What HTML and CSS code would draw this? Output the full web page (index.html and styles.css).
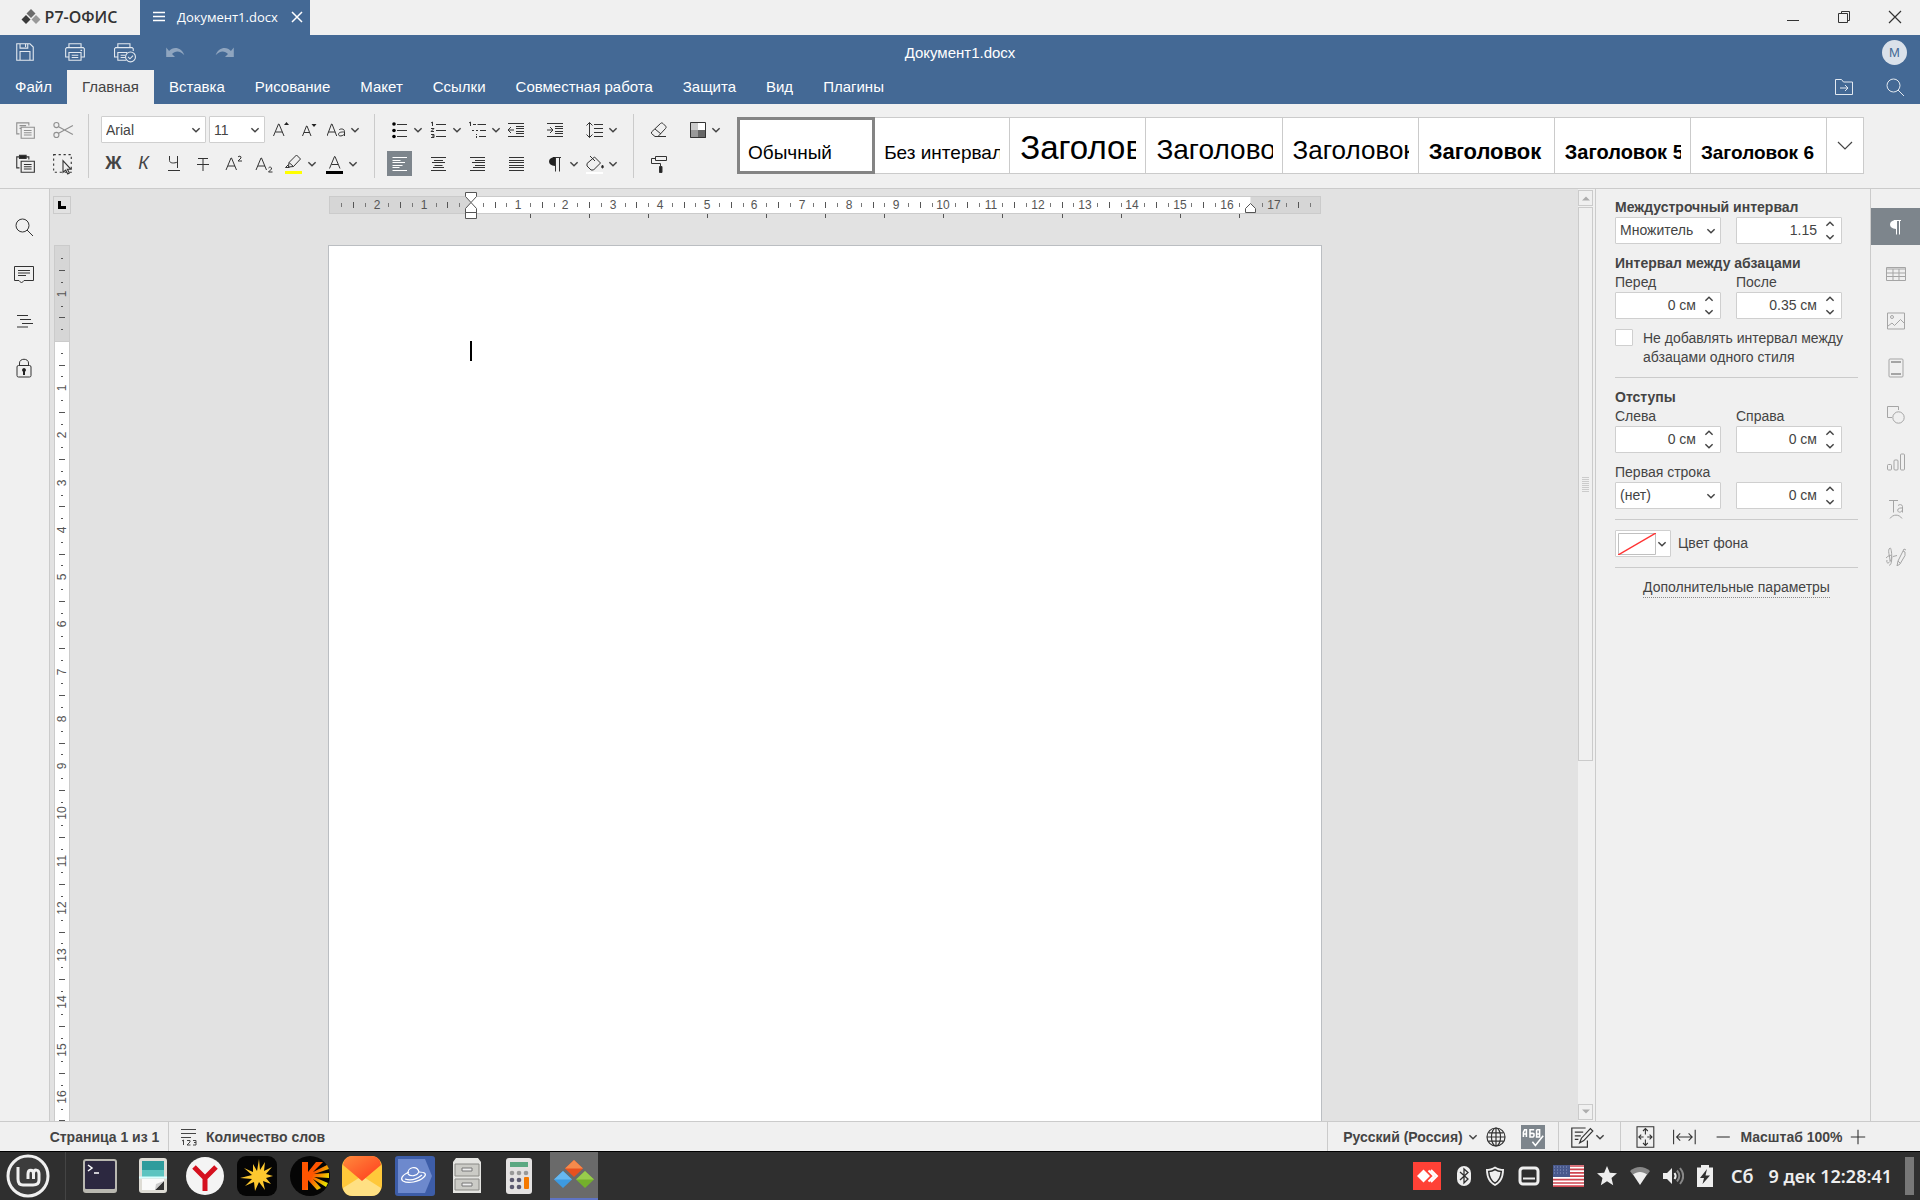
FILE: index.html
```html
<!DOCTYPE html>
<html lang="ru">
<head>
	<title>Документ1.docx</title>
	<meta charset="utf-8">
	<link rel="stylesheet" href="styles.css">
</head>

<body>
	<svg class="defs">
		<symbol id="caret" viewBox="0 0 10 10"><path d="M2 3.500l3 3 3-3" fill="none" stroke="#444" stroke-width="1.200"/></symbol>
		<symbol id="up" viewBox="0 0 10 10"><path d="M2 6.500l3-3 3 3" fill="none" stroke="#444" stroke-width="1.200"/></symbol>
		<symbol id="down" viewBox="0 0 10 10"><path d="M2 3.500l3 3 3-3" fill="none" stroke="#444" stroke-width="1.200"/></symbol>
		<symbol id="search" viewBox="0 0 20 20"><circle cx="8.500" cy="8.500" r="6.500"/><path d="M13 13l6 6"/></symbol>
	</svg>

	<!-- window title -->
	<header class="titlebar">
		<button class="home-tab">
			<svg width="20" height="16" viewBox="0 0 20 16"><path fill="#6b6b6b" d="M10 0l4.500 4.500L10 9 5.500 4.500z"/><path fill="#3a3a3a" d="M5 6l4.500 4.500L5 15 .5 10.500z"/><path fill="#999" d="M15 6l4.500 4.500L15 15l-4.500-4.500z"/></svg>
			<span>Р7-ОФИС</span>
		</button>
		<div class="doc-tab">
			<svg width="12" height="12" viewBox="0 0 12 12"><path d="M0 1.500h12M0 5.500h12M0 9.500h12" stroke="#fff" stroke-width="1.500"/></svg>
			<span>Документ1.docx</span>
			<button title="Закрыть"><svg width="12" height="12" viewBox="0 0 12 12"><path d="M1 1l10 10M11 1L1 11" stroke="#fff" stroke-width="1.500"/></svg></button>
		</div>
		<div class="window-btns">
			<button title="Свернуть"><svg width="14" height="14" viewBox="0 0 14 14"><path d="M1 10.500h12" stroke="#333"/></svg></button>
			<button title="Развернуть"><svg width="14" height="14" viewBox="0 0 14 14" fill="none" stroke="#333"><path d="M1.500 3.500h9v9h-9zM4.500 3.500v-2h8v9h-2"/></svg></button>
			<button title="Закрыть"><svg width="14" height="14" viewBox="0 0 14 14"><path d="M1 1l12 12M13 1L1 13" stroke="#333" stroke-width="1.200"/></svg></button>
		</div>
	</header>

	<div class="head">
		<div class="quick">
			<button title="Сохранить"><svg class="ic" viewBox="0 0 20 20"><path d="M2.500 2.500h12l3 3v12h-15zM5.500 17V9.500h9V17M5.500 2.500v4h7v-4M10.500 3v2.500"/></svg></button>
			<button title="Печать"><svg class="ic" viewBox="0 0 20 20"><path d="M4.500 6V2.500h11V6M4 14.500H1.500V7l1-1h15l1 1v7.500H16M4.500 10.500h11v7h-11zM7 13h6M7 15h6M15 8.500h1.500"/></svg></button>
			<button title="Быстрая печать"><svg class="ic" viewBox="0 0 20 20"><path d="M3.500 6V2.500h11V6M3.500 14.500H.5V7l1-1h15l1 1v2M11 17.500H3.500v-7H12M6 13h4M6 15h4"/><circle cx="15" cy="14.500" r="4.500"/><path d="M12.800 14.500l1.700 1.700 2.800-3"/></svg></button>
			<button title="Отменить" disabled><svg class="ic" viewBox="0 0 20 20"><path d="M2 6v8.500h8L7.300 11.800C10 8.500 15 8.500 18.500 13 16 5.500 8.500 4.500 4.600 9z" fill="#fff" stroke="none"/></svg></button>
			<button title="Повторить" disabled><svg class="ic" viewBox="0 0 20 20"><path d="M18 6v8.500h-8l2.700-2.700C10 8.500 5 8.500 1.500 13 4 5.500 11.500 4.500 15.400 9z" fill="#fff" stroke="none"/></svg></button>
		</div>
		<div class="doc-name">Документ1.docx</div>
		<div class="user"><span>M</span></div>
	</div>

	<nav class="tabs">
		<a href="#">Файл</a>
		<a href="#" class="active">Главная</a>
		<a href="#">Вставка</a>
		<a href="#">Рисование</a>
		<a href="#">Макет</a>
		<a href="#">Ссылки</a>
		<a href="#">Совместная работа</a>
		<a href="#">Защита</a>
		<a href="#">Вид</a>
		<a href="#">Плагины</a>
		<div class="tabs-right">
			<button title="Открыть расположение файла"><svg class="ic" viewBox="0 0 20 20"><path d="M1.500 2.500h6l2 2.500h9v12.500h-17zM6 11h8M11 8l3 3-3 3"/></svg></button>
			<button title="Поиск"><svg class="ic" viewBox="0 0 20 20"><use href="#search"/></svg></button>
		</div>
	</nav>

	<!-- toolbar -->
	<div class="toolbar">
		<div class="group g-clip">
			<div class="row">
				<button class="off" title="Копировать"><svg class="ic" viewBox="0 0 20 20"><path d="M5 13.500H2.500v-10h11V6M5 6h6M5 8.500h1M6.500 7.500h12v10h-12zM9 10.500h7M9 12.500h7M9 14.500h7"/></svg></button>
				<button class="off" title="Вырезать"><svg class="ic" viewBox="0 0 20 20"><circle cx="4" cy="5.500" r="2.300"/><circle cx="4" cy="14.500" r="2.300"/><path d="M6 7l13 7M6 13l13-7"/></svg></button>
			</div>
			<div class="row">
				<button title="Вставить"><svg class="ic" viewBox="0 0 20 20"><path d="M5 13.500H2.500v-10h11V6M6.500 7.500h12v10h-12zM9 10.500h7M9 12.500h7M9 14.500h7"/><path d="M5 2h6v3H5z" fill="#222"/></svg></button>
				<button title="Выделить"><svg class="ic" viewBox="0 0 20 20"><path d="M1.500 1.500h16v16h-16z" stroke-dasharray="2 2.500"/><path d="M10 7v10.500l2.500-2 1.800 3.500 1.500-.8-1.800-3.400h3.200z" fill="#f0f0f0"/></svg></button>
			</div>
		</div>
		<div class="group g-font">
			<div class="row">
				<label class="combo font-name"><select title="Шрифт"><option>Arial</option></select><svg><use href="#caret"/></svg></label>
				<label class="combo font-size"><select title="Размер шрифта"><option>11</option></select><svg><use href="#caret"/></svg></label>
				<button title="Увеличить размер"><svg class="ic" viewBox="0 0 20 20"><path d="M2.500 16l5-12h.5l5 12M4.500 12h6.700"/><path d="M13 5l2.500-3L18 5z" fill="#222" stroke="none"/></svg></button>
				<button title="Уменьшить размер"><svg class="ic" viewBox="0 0 20 20"><path d="M3.500 16L7.500 6H8l4 10M5 12.500h5.500"/><path d="M12.500 4l2.500 3 2.500-3z" fill="#222" stroke="none"/></svg></button>
				<button title="Изменить регистр"><svg class="ic" viewBox="0 0 20 20"><path d="M0 16L4.500 4H5l4.700 12M1.500 12h6.700M12 10c1-1.500 5.500-1.700 5.500 1.500V16M17.500 12c-3-.2-6 .3-6 2.300 0 2.500 4.500 2 6-.5"/></svg></button>
				<button class="drop"><svg><use href="#caret"/></svg></button>
			</div>
			<div class="row wide">
				<button title="Полужирный"><b class="letter">Ж</b></button>
				<button title="Курсив"><i class="letter">К</i></button>
				<button title="Подчеркнутый"><svg class="ic" viewBox="0 0 20 20"><path d="M5.500 2v4.500c0 3 5 3 8 1.500M13.500 2v12M4 16.500h12"/></svg></button>
				<button title="Зачеркнутый"><svg class="ic" viewBox="0 0 20 20"><path d="M4 4.500h10M9 4.500V17M3 10.500h12"/></svg></button>
				<button title="Надстрочный"><svg class="ic" viewBox="0 0 20 20"><path d="M2 16L7 4h.5l5 12M4 12h7M14 3c1-1.500 3.500-1 3 1l-3 3h4"/></svg></button>
				<button title="Подстрочный"><svg class="ic" viewBox="0 0 20 20"><path d="M2 16L7 4h.5l5 12M4 12h7M14.500 14c1-1.500 3.500-1 3 1l-3 3h4"/></svg></button>
				<button title="Цвет выделения"><svg class="ic" viewBox="0 0 20 20"><path d="M5 8.500L12.500 1l4 4-7 7.500-5 .5zM5 8.500l4.500 4M4.500 10.500l-3 3h4"/><path d="M1 17h17v3H1z" fill="#ff0" stroke="none"/></svg></button>
				<button class="drop"><svg><use href="#caret"/></svg></button>
				<button title="Цвет шрифта"><svg class="ic" viewBox="0 0 20 20"><path d="M4.500 14.500l5-12h.5l5 12M6.500 10.500h6.500"/><path d="M1 17h17v3H1z" fill="#000" stroke="none"/></svg></button>
				<button class="drop"><svg><use href="#caret"/></svg></button>
			</div>
		</div>
		<div class="group g-par">
			<div class="row">
				<button title="Маркеры"><svg class="ic" viewBox="0 0 20 20"><g fill="#000" stroke="none"><circle cx="4" cy="4" r="1.800"/><circle cx="4" cy="10.500" r="1.800"/><circle cx="4" cy="16.500" r="1.800"/></g><path d="M7 4.500h10M7 10.500h10M7 16.500h10"/></svg></button>
				<button class="drop"><svg><use href="#caret"/></svg></button>
				<button title="Нумерация"><svg class="ic" viewBox="0 0 20 20"><path d="M2 3l1.500-1v4M2 8.500h3L2 11.500h3M2 14.500h3v3H2M3 16h2M7 4.500h10M7 10.500h10M7 16.500h10"/></svg></button>
				<button class="drop"><svg><use href="#caret"/></svg></button>
				<button title="Многоуровневый список"><svg class="ic" viewBox="0 0 20 20"><path d="M1 3l1.500-1v4M5 4.500h3M9.500 4.500H18M4 10.500h2M8 10.500h2M12 10.500h6M8.500 14v1M8.500 16v2M11 16.500h7"/></svg></button>
				<button class="drop"><svg><use href="#caret"/></svg></button>
				<button title="Уменьшить отступ"><svg class="ic" viewBox="0 0 20 20"><path d="M1 3.500h16M9 6.500h8M9 8.500h8M9 11.500h8M9 13.500h8M1 16.500h16M1 10h6M4 7l-3 3 3 3"/></svg></button>
				<span class="nodrop"></span>
				<button title="Увеличить отступ"><svg class="ic" viewBox="0 0 20 20"><path d="M1 3.500h16M9 6.500h8M9 8.500h8M9 11.500h8M9 13.500h8M1 16.500h16M1 10h6M4 7l3 3-3 3"/></svg></button>
				<span class="nodrop"></span>
				<button title="Междустрочный интервал"><svg class="ic" viewBox="0 0 20 20"><path d="M4.500 2.500v15M1.500 5.500l3-3 3 3M1.500 14.500l3 3 3-3M9 4.500h9M9 8.500h9M9 12.500h9M9 16.500h9"/></svg></button>
				<button class="drop"><svg><use href="#caret"/></svg></button>
			</div>
			<div class="row">
				<button class="on" title="По левому краю"><svg class="ic" viewBox="0 0 20 20"><path d="M2.500 3.500H17M2.500 6.500h8M2.500 8.500H15M2.500 11.500h10M2.500 13.500h7M2.500 16.500H17"/></svg></button>
				<span class="nodrop"></span>
				<button title="По центру"><svg class="ic" viewBox="0 0 20 20"><path d="M2 3.500h15M5 6.500h9M3 8.500h13M5.500 11.500h8M4 13.500h11M2 16.500h15"/></svg></button>
				<span class="nodrop"></span>
				<button title="По правому краю"><svg class="ic" viewBox="0 0 20 20"><path d="M2 3.500h15M7 6.500h10M4 8.500h13M7 11.500h10M5 13.500h12M2 16.500h15"/></svg></button>
				<span class="nodrop"></span>
				<button title="По ширине"><svg class="ic" viewBox="0 0 20 20"><path d="M2 3.500h15M2 6.500h15M2 8.500h15M2 11.500h15M2 13.500h15M2 16.500h15"/></svg></button>
				<span class="nodrop"></span>
				<button title="Непечатаемые символы"><svg class="ic" viewBox="0 0 20 20"><path d="M7 3.500h8M9.500 3.500v14M13.500 3.500v14"/><path d="M9 3v9C1 12 1 3 9 3z" fill="#222" stroke="none"/></svg></button>
				<button class="drop"><svg><use href="#caret"/></svg></button>
				<button title="Заливка"><svg class="ic" viewBox="0 0 20 20"><path d="M2 9.500L9.500 3l6 6L8.500 16H6l-4-4zM5 2l5 5"/><path d="M17.500 11c3 4-3 4 0 0z" fill="#222"/><path d="M1 18h17v3H1z" fill="#fff" stroke="none"/></svg></button>
				<button class="drop"><svg><use href="#caret"/></svg></button>
			</div>
		</div>
		<div class="group g-clear">
			<div class="row">
				<button title="Очистить стиль"><svg class="ic" viewBox="0 0 20 20"><path d="M2.500 12l9-8.500c1-.9 1.700-.6 2.500 0l2.500 2.500c.8.900.8 1.700 0 2.500L9 16.500H6l-3.500-3zM6 9l6 5M9 16.500h8"/></svg></button>
				<span class="nodrop"></span>
				<button title="Цветовая схема"><svg class="ic" viewBox="0 0 20 20"><path d="M2 2h8v8H2z" fill="#ccc" stroke="none"/><path d="M10 2h8v8h-8z" fill="#fff" stroke="none"/><path d="M2 10h8v8H2z" fill="#999" stroke="none"/><path d="M10 10h8v8h-8z" fill="#666" stroke="none"/><path d="M2.500 2.500h15v15h-15z"/></svg></button>
				<button class="drop"><svg><use href="#caret"/></svg></button>
			</div>
			<div class="row">
				<button title="Копировать стиль"><svg class="ic" viewBox="0 0 20 20"><path d="M6.500 2.500h11v4h-11zM6.500 4.500h-4v5H11.500V12"/><path d="M10.500 12.500h2.500v6h-2.500z" fill="#222"/></svg></button>
			</div>
		</div>
		<div class="gallery">
			<button class="style s-normal selected"><span>Обычный</span></button>
			<button class="style s-normal"><span>Без интервала</span></button>
			<button class="style s-h1"><span>Заголовок 1</span></button>
			<button class="style s-h2"><span>Заголовок 2</span></button>
			<button class="style s-h3"><span>Заголовок 3</span></button>
			<button class="style s-h4"><span>Заголовок 4</span></button>
			<button class="style s-h5"><span>Заголовок 5</span></button>
			<button class="style s-h6"><span>Заголовок 6</span></button>
			<button class="more" title="Ещё"><svg width="16" height="10" viewBox="0 0 16 10"><path d="M1 1l7 7 7-7" fill="none" stroke="#444" stroke-width="1.200"/></svg></button>
		</div>
	</div>

	<main>
		<aside class="left-menu">
			<button title="Поиск"><svg class="ic" viewBox="0 0 20 20"><use href="#search"/></svg></button>
			<button title="Комментарии"><svg class="ic" viewBox="0 0 20 20"><path d="M.5 2.500h19v14H10L7.500 19 5 16.500H.5zM4 6.500h12M4 9h12M4 11.500h8"/></svg></button>
			<button title="Навигация"><svg class="ic" viewBox="0 0 20 20"><path d="M3 4.500h11M6 8.500h11M8 12.500h11M3 16h11"/></svg></button>
			<button title="Защита"><svg class="ic" viewBox="0 0 20 20"><rect x="3" y="7.500" width="14" height="11.500" rx="1.500"/><path d="M5.500 7.500V5c0-5 9-5 9 0v2.500"/><path d="M10 10a2 2 0 0 1 1 3.700V17H9v-3.300A2 2 0 0 1 10 10z" fill="#222" stroke="none"/></svg></button>
		</aside>

		<section class="editor">
			<button class="tab-kind" title="Табуляция"><svg width="8" height="8" viewBox="0 0 8 8"><path d="M1.500 0v6.500H8" fill="none" stroke="#000" stroke-width="3"/></svg></button>
			<div class="hruler"><svg id="hruler" width="994" height="32"></svg></div>
			<div class="vruler"><svg id="vruler" width="16" height="1500"></svg></div>
			<div class="canvas"><div class="page"><div class="cursor"></div></div></div>
			<div class="scroll">
				<button title="Вверх"><svg width="10" height="6" viewBox="0 0 10 6"><path d="M1 5.500l4-4 4 4z" fill="#adadad"/></svg></button>
				<div class="thumb"><i></i><i></i><i></i><i></i><i></i><i></i><i></i><i></i></div>
				<button title="Вниз"><svg width="10" height="6" viewBox="0 0 10 6"><path d="M1 .5l4 4 4-4z" fill="#adadad"/></svg></button>
			</div>
		</section>

		<form class="panel">
			<h4>Междустрочный интервал</h4>
			<div class="pair">
				<label class="combo"><select title="Междустрочный интервал"><option>Множитель</option></select><svg><use href="#caret"/></svg></label>
				<div class="spin"><input type="text" value="1.15" title="Значение"><button type="button"><svg><use href="#up"/></svg></button><button type="button"><svg><use href="#down"/></svg></button></div>
			</div>
			<h4>Интервал между абзацами</h4>
			<div class="pair">
				<label for="before">Перед</label>
				<label for="after">После</label>
				<div class="spin"><input type="text" id="before" value="0 см"><button type="button"><svg><use href="#up"/></svg></button><button type="button"><svg><use href="#down"/></svg></button></div>
				<div class="spin"><input type="text" id="after" value="0.35 см"><button type="button"><svg><use href="#up"/></svg></button><button type="button"><svg><use href="#down"/></svg></button></div>
			</div>
			<div class="check">
				<input type="checkbox" id="nospace">
				<label for="nospace">Не добавлять интервал между абзацами одного стиля</label>
			</div>
			<hr>
			<h4>Отступы</h4>
			<div class="pair">
				<label for="left">Слева</label>
				<label for="right">Справа</label>
				<div class="spin"><input type="text" id="left" value="0 см"><button type="button"><svg><use href="#up"/></svg></button><button type="button"><svg><use href="#down"/></svg></button></div>
				<div class="spin"><input type="text" id="right" value="0 см"><button type="button"><svg><use href="#up"/></svg></button><button type="button"><svg><use href="#down"/></svg></button></div>
			</div>
			<label class="first-line" for="first">Первая строка</label>
			<div class="pair">
				<div class="combo"><select id="first"><option>(нет)</option></select><svg><use href="#caret"/></svg></div>
				<div class="spin"><input type="text" value="0 см" title="Первая строка"><button type="button"><svg><use href="#up"/></svg></button><button type="button"><svg><use href="#down"/></svg></button></div>
			</div>
			<hr>
			<div class="fill">
				<button type="button" id="bg" class="color">
					<svg width="38" height="22" viewBox="0 0 38 22"><path d="M.5.5h37v21H.5z" fill="#fff" stroke="#c0c0c0"/><path d="M0 22L38 0" stroke="#f33" stroke-width="1.500"/></svg>
					<svg class="arrow"><use href="#caret"/></svg>
				</button>
				<label for="bg">Цвет фона</label>
			</div>
			<hr>
			<a href="#" class="advanced">Дополнительные параметры</a>
		</form>

		<aside class="right-menu">
			<button class="on" title="Параметры абзаца"><svg class="ic" viewBox="0 0 20 20"><path d="M8 3.500h7M10.500 3.500v14M13.500 3.500v14"/><path d="M10 3v9C2 12 2 3 10 3z" fill="#fff" stroke="none"/></svg></button>
			<button title="Таблица"><svg class="ic" viewBox="0 0 20 20"><path d="M.5 3.500h19v13H.5zM.5 5h19M.5 9h19M.5 12.500h19M7 5v11.500M13 5v11.500"/></svg></button>
			<button title="Изображение"><svg class="ic" viewBox="0 0 20 20"><path d="M1.500 2h17v16h-17zM2 15l4-3 2.500 2.500 6-6 4 4"/><circle cx="6" cy="6" r="1.500"/></svg></button>
			<button title="Колонтитулы"><svg class="ic" viewBox="0 0 20 20"><rect x="3" y="1" width="14" height="18" rx="1"/><path d="M5 4h10M5 16h10" stroke-width="2"/></svg></button>
			<button title="Фигура"><svg class="ic" viewBox="0 0 20 20"><path d="M6 12.500H1.500v-11h11V5"/><circle cx="12.500" cy="12.500" r="5.700"/></svg></button>
			<button title="Диаграмма"><svg class="ic" viewBox="0 0 20 20"><rect x="1.500" y="12.500" width="4" height="5.500" rx="1"/><rect x="8" y="8" width="4" height="10" rx="1"/><rect x="14.500" y="2" width="4" height="16" rx="1"/></svg></button>
			<button title="Text Art"><svg class="ic" viewBox="0 0 20 20"><path d="M3 1.500h9M7.500 1.500v12M12 6.500c1-1.300 4.500-1.300 4.500 1v6M16.500 9c-2-.2-4.800.2-4.800 2.200 0 2.800 3.800 2.500 4.800-.2M4 19.500c3-4.500 9-4.500 12 0"/></svg></button>
			<button title="Подпись"><svg class="ic" viewBox="0 0 20 20"><path d="M3 19c4 2 3-18 1-17-3 2 0 8 0 13M0 12c5-5 7-2 5 2s-5 4-4 0M7 10.500l4-1M11 20l1-5 5-10 2 1v3.500l-5 8.500zM12 15l2 2M17 5l1-2 2 1"/></svg></button>
		</aside>
	</main>

	<footer class="status">
		<button class="pages">Страница 1 из 1</button>
		<button class="words"><svg width="18" height="20" viewBox="0 0 18 20"><path d="M1 2.500h15M1 6.500h15M1 10.500h10M2 14l1.500-1v5M7 13.500h3V15l-3 3h3.500M13 13.500h3v4.500h-3M14 15.500h2" fill="none" stroke="#444"/></svg>Количество слов</button>
		<div class="status-right">
			<div class="cell lang">
				<button class="txt">Русский (Россия)</button>
				<svg class="arrow"><use href="#caret"/></svg>
				<button title="Язык документа"><svg class="ic" viewBox="0 0 20 20"><circle cx="10" cy="10" r="7.500"/><ellipse cx="10" cy="10" rx="3.800" ry="7.500"/><path d="M10 2.500v15M2.500 10h15M4 6.500h12M4 13.500h12"/></svg></button>
				<button class="on" title="Проверка орфографии"><svg class="ic" viewBox="0 0 20 20"><path d="M2 10V6l1-2h1.500v6M2 7.500h2.500M11 4H7.500v6H10l.8-.8V7.500L10 7H7.500M13 4v6h2.500V7.500H13M13 4h2.500v3M9.500 14l2.500 3 6.500-8" stroke-width="1.300"/></svg></button>
			</div>
			<div class="cell track">
				<button title="Отслеживать изменения"><svg class="ic" viewBox="0 0 20 20"><path d="M14.500 13v5.500h-13V2.500H13M4 6h7M4 9h5M4 12h3M8 15l1.500-4L17 3l2 2-7.500 8z"/></svg></button>
				<svg class="arrow"><use href="#caret"/></svg>
			</div>
			<div class="cell zoom">
				<button title="По размеру страницы"><svg class="ic" viewBox="0 0 20 20"><path d="M2.500 1.500h14v17h-14zM9.500 3v5M9.500 12v5M4 10h4M11 10h4M7.500 5l2-2 2 2M7.500 15l2 2 2-2M6 8l-2 2 2 2M13 8l2 2-2 2"/></svg></button>
				<button title="По ширине"><svg class="ic" viewBox="0 0 20 20"><path d="M.5 4v12M18.500 4v12M3 10h13M6 7l-3 3 3 3M13 7l3 3-3 3"/></svg></button>
				<button title="Уменьшить"><svg class="ic" viewBox="0 0 20 20"><path d="M3 10h11"/></svg></button>
				<button class="txt">Масштаб 100%</button>
				<button title="Увеличить"><svg class="ic" viewBox="0 0 20 20"><path d="M4 10h12M10 4v12"/></svg></button>
			</div>
		</div>
	</footer>

	<!-- desktop panel -->
	<div class="taskbar">
		<button class="start" title="Меню"><svg width="44" height="44" viewBox="0 0 44 44"><circle cx="22" cy="22" r="20" fill="#3c3c3c" stroke="#f0f0f0" stroke-width="3"/><path d="M12 13v12c0 4 2 6 5 6h10c4 0 6-2 6-5v-6c0-5-5-5-5.500-1v6M27.500 20c0-5-5.500-5-5.500 0v5" fill="none" stroke="#f0f0f0" stroke-width="3"/></svg></button>
		<div class="launchers">
			<button title="Терминал"><svg width="40" height="40" viewBox="0 0 40 40"><rect x="3" y="3" width="34" height="34" rx="3" fill="#b9b8b0"/><rect x="5" y="5" width="30" height="28" rx="1" fill="#2c2840"/><path d="M8 9l4 3-4 3M14 17h5" stroke="#fff" stroke-width="1.500" fill="none"/></svg></button>
			<button title="Скриншот"><svg width="40" height="40" viewBox="0 0 40 40"><rect x="6" y="2" width="28" height="35" rx="3" fill="#dedcd5"/><path d="M9 5h22v17H9z" fill="#2f9c9c"/><path d="M9 14h22v7H9z" fill="#5cc4c0"/><path d="M9 23h22v11H9z" fill="#fafafa"/><path d="M31 25v9h-9z" fill="#333"/><path d="M22 34l1-6 8-3z" fill="#ccc"/><path d="M6 21.500h28" stroke="#d8ffff" stroke-width="2"/></svg></button>
			<button title="Яндекс Браузер"><svg width="40" height="40" viewBox="0 0 40 40"><circle cx="20" cy="20" r="19" fill="#f4f4f4"/><path d="M9 11l11 11v13M31 11L20 22" fill="none" stroke="#d5101e" stroke-width="5"/></svg></button>
			<button title="Звезда"><svg width="40" height="40" viewBox="0 0 40 40"><rect width="40" height="40" rx="9" fill="#050505"/><path fill="#fdc82f" d="M22 3l1 11 5-8-1 9 8-4-6 7 7 2-7 2 5 6-8-3 2 9-6-8-4 9-1-9-9 4 7-7-12-1 12-3-8-7 9 4 0-8 4 7z"/></svg></button>
			<button title="Кинопоиск"><svg width="40" height="40" viewBox="0 0 40 40"><defs><linearGradient id="kp" x2="1" y2=".6"><stop offset=".5" stop-color="#ff5500"/><stop offset="1" stop-color="#e8e000"/></linearGradient></defs><circle cx="20" cy="20" r="20" fill="#050505"/><path fill="url(#kp)" d="M12 6h6v10l8-10h7L23 16l14-7 2 4-15 5 15-1v5l-15-1 14 6-2 4-13-8 8 9-4 2-9-10v10h-6z"/></svg></button>
			<button title="Почта"><svg width="40" height="40" viewBox="0 0 40 40"><defs><linearGradient id="ml" x2="1" y2="1"><stop stop-color="#ff8a3c"/><stop offset="1" stop-color="#ff3a1c"/></linearGradient></defs><rect width="40" height="40" rx="11" fill="#ffc83a"/><path d="M1 32l19-12 19 12c-1 5-4 8-10 8H11c-6 0-9-3-10-8z" fill="#ffe083"/><path d="M1 9c1-6 4-9 10-9h18c6 0 9 3 10 9L20 25z" fill="url(#ml)"/></svg></button>
			<button title="Диск"><svg width="40" height="40" viewBox="0 0 40 40"><rect width="40" height="40" rx="3" fill="#3d5da8"/><path d="M3 3h27l7 17-7 17H3z" fill="#6d89cd"/><g fill="none" stroke="#fff" stroke-width="1.200"><path d="M14 16c-7 3-9 7-6 9 5 3 16 1 21-4 3-3 1-5-5-5"/><path d="M13 18c-1-7 9-9 11-2M13 18c3 3 9 2 11-2M10 23c6 2 12 0 17-4"/></g></svg></button>
			<button title="Файлы"><svg width="40" height="40" viewBox="0 0 40 40"><path d="M9 2h22l3 4v31H6V6z" fill="#e4e4e1"/><path d="M8 8h24v12H8zM8 23h24v11H8z" fill="#cbcbc6" stroke="#8a8a86"/><path d="M15 12v3h10v-3zM15 27v3h10v-3z" fill="#eee" stroke="#777"/></svg></button>
			<button title="Калькулятор"><svg width="40" height="40" viewBox="0 0 40 40"><rect x="7" y="2" width="26" height="36" rx="3" fill="#e4e2e2"/><path d="M11 6h18v5H11z" fill="#5ba882"/><g fill="#999"><circle cx="13" cy="17" r="2.300"/><circle cx="20" cy="17" r="2.300"/><circle cx="27" cy="17" r="2.300"/></g><g fill="#5b5970"><circle cx="13" cy="24" r="2.300"/><circle cx="20" cy="24" r="2.300"/><circle cx="13" cy="31" r="2.300"/><circle cx="20" cy="31" r="2.300"/></g><rect x="25" y="21" width="5" height="12" rx="1" fill="#f57900"/></svg></button>
			<button class="running" title="Р7-Офис"><svg width="40" height="40" viewBox="0 0 40 40"><path d="M20 5l9 8.500-9 8.500-9-8.500z" fill="#e8501e"/><path d="M9 16l9 8.500L9 33l-9-8.500z" fill="#3d9ae0"/><path d="M31 16l9 8.500-9 8.500-9-8.500z" fill="#74b02c"/><path d="M20 5l9 8.500H11z" fill="#f58a4c"/><path d="M9 16l9 8.500H0z" fill="#66b8f0"/><path d="M31 16l9 8.500H22z" fill="#98cc4c"/></svg></button>
		</div>
		<div class="tray">
			<svg width="28" height="28" viewBox="0 0 28 28"><path d="M0 0h28v28H0z" fill="#ff4136"/><path d="M4 14l6.500-6.500L17 14l-6.500 6.500z" fill="#fff"/><path d="M15.500 8.500L21 14l-5.500 5.500M18 8l6 6-6 6" fill="none" stroke="#fff" stroke-width="2"/></svg>
			<svg class="bt" width="16" height="22" viewBox="0 0 16 22"><rect x="1" y="1" width="14" height="20" rx="7" fill="#eee"/><path d="M4 7l8 7-4 4V4l4 3.500L4 15" fill="none" stroke="#2f2f2f" stroke-width="1.300"/></svg>
			<svg width="20" height="22" viewBox="1 0 20 22"><path d="M11 1.500c3 2 6 2.500 9 2.500 0 9-3 14-9 17C5 18 2 13 2 4c3 0 6-.5 9-2.500z" fill="#eee"/><path d="M11 4.500c2 1.300 4 2 6.300 2-.4 6-2.500 9.500-6.300 11.700C7.200 16 5.100 12.500 4.700 6.500 7 6.500 9 5.800 11 4.500z" fill="#eee" stroke="#2f2f2f" stroke-width="1.500"/></svg>
			<svg width="22" height="20" viewBox="0 0 22 20"><rect x="2" y="2" width="18" height="16" rx="3" fill="#2f2f2f" stroke="#eee" stroke-width="3"/><path d="M5 12.500h12" stroke="#eee" stroke-width="2"/></svg>
			<svg class="flag" width="31" height="22" viewBox="0 0 31 22"><path d="M0 0h31v22H0z" fill="#fff"/><path d="M0 1h31M0 4.400h31M0 7.800h31M0 11.200h31M0 14.600h31M0 18h31M0 21.200h31" stroke="#cf4650" stroke-width="1.700"/><path d="M0 0h17v12H0z" fill="#49598c"/><path d="M1 2h15M1 5h15M1 8h15" stroke="#8c9ac4" stroke-dasharray="1 2"/></svg>
			<svg width="20" height="20" viewBox="0 0 20 20"><path d="M10 0l2.800 6.800 7.200.5-5.500 4.700 1.700 7.300L10 15.300l-6.200 4L5.500 12 0 7.300l7.200-.5z" fill="#eee"/></svg>
			<svg width="20" height="20" viewBox="1 0 20 20"><path d="M1 5c6-5.500 14-5.500 20 0l-3 4H4z" fill="#888"/><path d="M4 8.500c4-3.500 10-3.500 14 0L11 19z" fill="#eee"/></svg>
			<svg width="21" height="20" viewBox="1 0 21 20"><path d="M1 7h4l5-5v16l-5-5H1z" fill="#eee"/><path d="M12.500 7c1.500 2 1.500 4 0 6" fill="none" stroke="#eee" stroke-width="2"/><path d="M15 4.500c3 3.500 3 7.500 0 11M18 2c4 5 4 11 0 16" fill="none" stroke="#888" stroke-width="2"/></svg>
			<svg width="16" height="22" viewBox="0 0 16 22"><path d="M0 2.500h4V0h8v2.500h4V22H0z" fill="#eee"/><path d="M10 4l-7 9h4l-1.500 6L13 10.500H8.500z" fill="#2f2f2f"/></svg>
			<time><span>Сб</span><span>9 дек 12:28:41</span></time>
			<button class="desk" title="Показать рабочий стол"></button>
		</div>
	</div>

	<script type="text/javascript">
		var NS = "http://www.w3.org/2000/svg";
		var CM = 47.24; // one centimetre on the ruler

		function add(svg, name, attrs, text){
			var el = document.createElementNS(NS, name);
			for(var key in attrs){
				el.setAttribute(key, attrs[key]);
			}
			if(text) el.textContent = text;
			svg.appendChild(el);
		}

		// horizontal ruler: zero is 3cm from the page edge, text width is 16.5cm
		var h = document.getElementById("hruler");
		var zero = 143;
		add(h, "rect", {x: 1.5, y: 0.5, width: 991, height: 17, fill: "#d6d6d6", stroke: "#cbcbcb"});
		add(h, "rect", {x: zero, y: 1, width: 16.5 * CM, height: 16, fill: "#fff"});
		for(var i = -11; i < 72; i++){
			var x = Math.round(zero + i * CM / 4);
			if(i == 0 || i == 66) continue;
			if(i % 4 == 0){
				add(h, "text", {x: x, y: 13, "text-anchor": "middle"}, String(Math.abs(i / 4)));
			}else if(i % 2 == 0){
				add(h, "rect", {x: x, y: 6, width: 1, height: 6, fill: "#555"});
			}else{
				add(h, "rect", {x: x, y: 7, width: 1, height: 4, fill: "#777"});
			}
		}
		// default tab stops
		for(var t = 1; t < 14; t++){
			add(h, "rect", {x: Math.round(zero + t * 1.25 * CM), y: 18, width: 1, height: 4, fill: "#555"});
		}

		// vertical ruler: zero is 2cm from the top
		var v = document.getElementById("vruler");
		var top0 = 96;
		add(v, "rect", {x: 0.5, y: 0.5, width: 15, height: 1499, fill: "#fff", stroke: "#cbcbcb"});
		add(v, "rect", {x: 0.5, y: 0.5, width: 15, height: top0, fill: "#d6d6d6", stroke: "#cbcbcb"});
		for(var j = -7; j < 110; j++){
			var y = Math.round(top0 + j * CM / 4);
			if(j == 0) continue;
			if(j % 4 == 0){
				add(v, "text", {x: 12, y: y, "text-anchor": "middle", transform: "rotate(-90 12 " + y + ")"}, String(Math.abs(j / 4)));
			}else if(j % 2 == 0){
				add(v, "rect", {x: 5, y: y, width: 6, height: 1, fill: "#555"});
			}else{
				add(v, "rect", {x: 7, y: y, width: 2, height: 1, fill: "#555"});
			}
		}

		// indent markers
		add(h, "path", {d: "M137.500 -3.500h11v4l-5.500 6-5.500-6z", "class": "mark"});
		add(h, "path", {d: "M137.500 16.500v-4l5.500-6 5.500 6v4zM137.500 16.500h11v6h-11z", "class": "mark"});
		add(h, "path", {d: "M917.500 16.500v-4l5-5 5 5v4z", "class": "mark"});
	</script>
</body>
</html>
```
FILE: styles.css
```css
*{
	box-sizing: border-box;
}

body{
	margin: 0;
	height: 100vh;
	display: flex;
	flex-direction: column;
	overflow: hidden;
	background: #f0f0f0;
	color: #444;
	font-family: "Liberation Sans", Arial, sans-serif;
	font-size: 14px;
}

button{
	display: flex;
	align-items: center;
	justify-content: center;
	padding: 0;
	border: 0;
	background: none;
	color: inherit;
	font: inherit;
	white-space: nowrap;
	flex: none;
}

a{
	color: inherit;
	text-decoration: none;
}

svg{
	flex: none;
}

.defs{
	display: none;
}

.ic{
	width: 20px;
	height: 20px;
	fill: none;
	stroke: #333;
	stroke-width: 1;
}

/* title bar */
.titlebar{
	display: flex;
	height: 35px;
	font-family: "Open Sans", sans-serif;
}

.home-tab{
	width: 140px;
	padding: 0 2px 2px 0;
	gap: 4px;
	color: #333;
	font-size: 16px;
	font-weight: 600;
}

.doc-tab{
	width: 170px;
	padding: 0 7px 2px 13px;
	display: flex;
	align-items: center;
	gap: 12px;
	background: #446995;
	color: #fff;
	font-size: 13px;
}

.doc-tab span{
	flex: 1;
	white-space: nowrap;
}

.window-btns{
	display: flex;
	margin-left: auto;
	padding-bottom: 2px;
}

.window-btns button,
.tabs-right button{
	width: 51px;
}

/* blue header */
.head,
.tabs{
	background: #446995;
	color: #fff;
	font-size: 15px;
}

.head{
	display: grid;
	grid-template-columns: 1fr auto 1fr;
	height: 35px;
	padding-bottom: 1px;
	align-items: center;
}

.head .ic,
.tabs .ic{
	stroke: #e3e9f0;
}

.quick .ic{
	width: 22px;
	height: 22px;
}

.quick{
	display: flex;
}

.quick button{
	width: 50px;
}

.quick button:disabled{
	opacity: .4;
}

.user{
	display: flex;
	justify-content: flex-end;
	padding-right: 13px;
}

.user span{
	width: 25px;
	height: 25px;
	border-radius: 50%;
	background: #dae1ea;
	color: #446995;
	font-size: 13px;
	line-height: 25px;
	text-align: center;
}

.tabs{
	display: flex;
	height: 34px;
}

.tabs a{
	padding: 0 15px;
	line-height: 34px;
}

.tabs a.active{
	background: #f0f0f0;
	color: #444;
}

.tabs-right{
	display: flex;
	margin-left: auto;
}

/* toolbar */
.toolbar{
	display: flex;
	height: 85px;
	padding: 10px 0;
	border-bottom: 1px solid #cbcbcb;
}

.group{
	display: flex;
	flex-direction: column;
	gap: 8px;
	padding: 2px 12px;
	border-right: 1px solid #cbcbcb;
}

.row{
	display: flex;
	align-items: center;
	height: 25px;
}

.row:first-child{
	height: 27px;
}

.row button{
	width: 25px;
	height: 25px;
}

.row .drop,
.nodrop{
	width: 13px;
	margin-right: 1px;
}

.row .drop{
	padding-right: 2px;
}

.drop svg,
.arrow{
	width: 12px;
	height: 12px;
}

.on{
	background: #7d858c;
}

.on .ic{
	stroke: #fff;
}

.off{
	opacity: .5;
}

.g-clip{
	width: 89px;
}

.g-clip .row{
	gap: 13px;
}

.g-clip .ic{
	width: 22px;
	height: 22px;
}

.g-font{
	width: 286px;
}

.g-font .row{
	gap: 3px;
}

.g-font .wide{
	gap: 5px;
}

.g-font .drop{
	margin: 0 -2px 0 -5px;
}

.g-font .row:first-child .drop{
	margin: 0 0 0 -3px;
}

.g-par{
	width: 259px;
}

.g-clear{
	width: 103px;
	border: 0;
}

.letter{
	font-size: 18px;
}

.combo{
	position: relative;
	height: 27px;
}

.combo select{
	width: 100%;
	height: 27px;
	padding: 0 4px;
	border: 1px solid #cfcfcf;
	border-radius: 1px;
	appearance: none;
	background: #fff;
	color: #444;
	font: inherit;
}

.combo svg{
	position: absolute;
	right: 4px;
	top: 8px;
	width: 12px;
	height: 12px;
	pointer-events: none;
}

.font-name{
	width: 105px;
}

.font-size{
	width: 56px;
}

.gallery{
	display: flex;
	flex: 1;
	min-width: 0;
	height: 57px;
	margin: 3px 56px 0 0;
	border: 1px solid #cbcbcb;
	background: #fff;
}

.style{
	flex: 1 1 0;
	min-width: 0;
	padding: 0 9px 0 10px;
	border-right: 1px solid #cbcbcb;
	color: #000;
	align-items: flex-start;
	justify-content: flex-start;
}

.style span{
	flex: 1;
	min-width: 0;
	height: 55px;
	overflow: hidden;
	white-space: nowrap;
	text-align: left;
	line-height: 1;
}

.style span::before{
	content: "";
	display: inline-block;
	height: 41px;
}

.style.selected{
	outline: 3px solid #848484;
	outline-offset: -2px;
}

.s-normal{
	font-size: 19px;
}

.s-h1{
	font-size: 33px;
}

.s-h2{
	font-size: 28px;
}

.s-h3{
	font-size: 26px;
}

.s-h4{
	font-size: 22px;
	font-weight: bold;
}

.s-h5{
	font-size: 20px;
	font-weight: bold;
}

.s-h6{
	font-size: 19px;
	font-weight: bold;
}

.more{
	width: 36px;
}

/* work area */
main{
	flex: 1;
	min-height: 0;
	display: flex;
}

.left-menu,
.right-menu{
	display: flex;
	flex-direction: column;
	gap: 10px;
	width: 50px;
	padding-top: 19px;
}

.left-menu{
	padding-right: 1px;
	border-right: 1px solid #cbcbcb;
}

.left-menu button,
.right-menu button{
	height: 37px;
}

.right-menu{
	border-left: 1px solid #cbcbcb;
}

.right-menu button:not(.on) .ic{
	stroke: #a5a5a5;
}

.editor{
	flex: 1;
	min-width: 0;
	display: grid;
	grid-template-columns: 21px 1fr 18px;
	grid-template-rows: 56px 1fr;
	overflow: hidden;
	background: #e2e2e2;
}

.tab-kind{
	width: 18px;
	height: 18px;
	margin: 7px 0 0 3px;
	border: 1px solid #cbcbcb;
}

.hruler{
	display: flex;
	justify-content: center;
	padding: 7px 0 0 1px;
}

.hruler svg{
	overflow: visible;
}

.vruler{
	grid-column: 1;
	grid-row: 2;
	min-height: 0;
	overflow: hidden;
	padding-left: 4px;
}

.hruler text,
.vruler text{
	font-size: 12px;
	fill: #555;
}

.mark{
	fill: #fff;
	stroke: #555;
}

.canvas{
	grid-column: 2;
	grid-row: 2;
	min-height: 0;
	overflow: hidden;
	padding-left: 1px;
}

.page{
	width: 994px;
	height: 1404px;
	margin: 0 auto;
	padding: 95px 141px;
	border: 1px solid #bbbec2;
	background: #fff;
}

.cursor{
	width: 2px;
	height: 20px;
	background: #000;
}

.scroll{
	grid-column: 3;
	grid-row: 1 / 3;
	display: flex;
	flex-direction: column;
	gap: 1px;
	padding: 1px 2px 1px 0;
	background: #f0f0f0;
	border-left: 1px solid #e2e2e2;
}

.scroll button{
	height: 16px;
	border: 1px solid #cbcbcb;
}

.scroll button:last-child{
	margin-top: auto;
}

.thumb{
	height: calc(60% - 4px);
	display: flex;
	flex-direction: column;
	align-items: center;
	justify-content: center;
	gap: 1px;
	border: 1px solid #cbcbcb;
}

.thumb i{
	width: 7px;
	height: 1px;
	background: #cbcbcb;
}

/* paragraph settings */
.panel{
	width: 275px;
	padding: 9px 12px 0 19px;
	border-left: 1px solid #cbcbcb;
	line-height: 19px;
}

.panel h4{
	margin: 0;
	font-size: 14px;
}

.pair{
	display: grid;
	grid-template-columns: 106px 106px;
	column-gap: 15px;
	margin-bottom: 10px;
}

.spin{
	display: grid;
	grid-template-columns: 1fr 22px;
	grid-template-rows: 1fr 1fr;
	height: 27px;
	border: 1px solid #cfcfcf;
	border-radius: 1px;
	background: #fff;
}

.spin input{
	grid-row: 1 / 3;
	width: 100%;
	min-width: 0;
	padding: 0 2px;
	border: 0;
	background: none;
	color: #444;
	font: inherit;
	text-align: right;
}

.spin svg{
	width: 12px;
	height: 12px;
}

.check{
	display: flex;
	gap: 10px;
}

.check input{
	flex: none;
	appearance: none;
	width: 18px;
	height: 17px;
	margin: 0;
	border: 1px solid #cfcfcf;
	border-radius: 1px;
	background: #fff;
}

.panel hr{
	height: 1px;
	margin: 10px 0;
	border: 0;
	background: #cbcbcb;
}

.first-line{
	display: block;
}

.fill{
	display: flex;
	align-items: center;
	gap: 7px;
}

.color{
	width: 56px;
	height: 27px;
	border: 1px solid #cfcfcf;
	border-radius: 1px;
	background: #fff;
}

.advanced{
	display: table;
	margin: 0 auto;
	border-bottom: 1px dotted #888;
}

/* status bar */
.status{
	display: flex;
	height: 31px;
	border-top: 1px solid #cbcbcb;
	font-size: 14px;
	font-weight: bold;
}

.status .pages{
	width: 169px;
	padding-left: 41px;
	border-right: 1px solid #cbcbcb;
}

.status .words{
	gap: 8px;
	padding-left: 11px;
}

.status-right{
	display: flex;
	margin-left: auto;
}

.cell{
	display: flex;
	align-items: center;
	border-left: 1px solid #cbcbcb;
}

.cell .ic{
	width: 24px;
	height: 24px;
}

.lang{
	width: 231px;
	padding-left: 16px;
	gap: 5px;
}

.lang .txt{
	width: 118px;
}

.lang .on{
	margin-left: 8px;
}

.track{
	width: 62px;
	padding-left: 11px;
}

.zoom{
	width: 300px;
	padding-left: 13px;
}

.zoom button:nth-child(2){
	margin: 0 16px 0 15px;
}

.zoom .txt{
	width: 109px;
}

.zoom .ic{
	stroke-width: .9;
}

/* taskbar */
.taskbar{
	display: flex;
	align-items: center;
	height: 48px;
	background: #2f2f2f;
	box-shadow: 0 -1px #000;
	color: #eee;
}

.taskbar .start{
	width: 66px;
	height: 48px;
	margin-right: 8px;
	padding-right: 10px;
	border-right: 1px solid #444;
}

.launchers{
	display: grid;
	grid-template-columns: repeat(10, 1fr);
	width: 524px;
	height: 48px;
}

.launchers .running{
	justify-self: end;
	width: 48px;
	border-bottom: 2px solid #5f74c4;
	background: #6a6a6a;
}

.tray{
	display: flex;
	align-items: center;
	gap: 13px;
	margin-left: auto;
	padding-right: 6px;
}

.tray .bt{
	margin-left: 2px;
}

.tray time{
	display: flex;
	gap: 15px;
	margin-left: 5px;
	font-family: "Noto Sans", sans-serif;
	font-size: 18px;
	font-weight: 600;
}

.desk{
	width: 9px;
	height: 38px;
	background: #777;
}
```
